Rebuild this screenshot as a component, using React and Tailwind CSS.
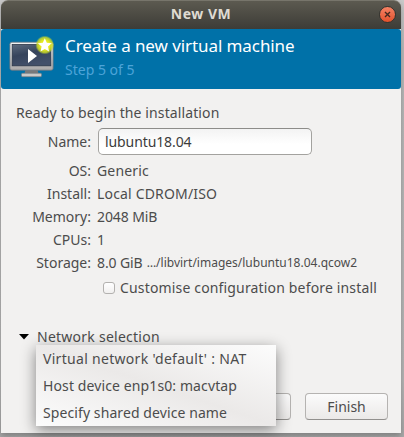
const details = [
  ['OS:', 'Generic', 'tracking-[0.15px]'],
  ['Install:', 'Local CDROM/ISO', 'tracking-[0.17px]'],
  ['Memory:', '2048 MiB', 'tracking-[-0.1px]'],
  ['CPUs:', '1', ''],
];

const networks = [
  ["Virtual network 'default' : NAT", 'tracking-[0.3px]'],
  ['Host device enp1s0: macvtap', 'tracking-[0.11px]'],
  ['Specify shared device name', 'tracking-[0.09px]'],
];

function MonitorIcon() {
  return (
    <svg width="46" height="44" viewBox="0 0 46 44" className="block shrink-0">
      <defs>
        <linearGradient id="frame" x1="0" y1="0" x2="0" y2="1">
          <stop offset="0" stopColor="#f4f4f4" />
          <stop offset="1" stopColor="#aaa8a8" />
        </linearGradient>
        <linearGradient id="screen" x1="0" y1="0" x2="0.4" y2="1">
          <stop offset="0" stopColor="#5d6b7e" />
          <stop offset="0.5" stopColor="#36445c" />
          <stop offset="1" stopColor="#43506a" />
        </linearGradient>
        <radialGradient id="glow">
          <stop offset="0.5" stopColor="#e6ea20" />
          <stop offset="0.8" stopColor="#cfdc25" stopOpacity="0.8" />
          <stop offset="1" stopColor="#a9c83a" stopOpacity="0" />
        </radialGradient>
      </defs>
      <path d="M16.5 34.5h12l1 4h-14z" fill="#77797b" />
      <rect x="12.5" y="38.3" width="20" height="3.4" rx="1" fill="#c9c9c8" stroke="#777" strokeWidth=".6" />
      <rect x=".9" y="7.2" width="43.2" height="28" rx="2" fill="url(#frame)" stroke="#6c7680" strokeWidth=".8" />
      <rect x="3.2" y="9.5" width="38.6" height="21.3" fill="url(#screen)" stroke="#2b3648" strokeWidth=".8" />
      <path d="M19 14l9 7-9 7z" fill="#fff" />
      <circle cx="35.8" cy="10" r="9.5" fill="url(#glow)" />
      <path d="M35.8 3.3l2 4.5 4.9.5-3.7 3.3 1.1 4.8-4.3-2.5-4.3 2.5 1.1-4.8-3.7-3.3 4.9-.5z" fill="#fff" />
    </svg>
  );
}

export default function App() {
  return (
    <div className="relative h-[437px] w-[404px] overflow-hidden bg-[linear-gradient(#c9c9c9_0px,#bababa_55px,#b7b7b7_380px,#a9a9a9_437px)] pl-px font-['Noto_Sans','Open_Sans',sans-serif] text-[14px] whitespace-nowrap text-[#4c4c4c]">
      <div className="flex h-[433px] w-[400px] flex-col rounded-t-[7px] bg-[#f2f1f0] shadow-[0_3px_6px_#0004]">
        <header className="flex h-[29px] shrink-0 items-center rounded-t-[7px] border-t border-[#77756b] bg-linear-to-b from-[#5c5a50] to-[#3d3c37] pr-[5px]">
          <h1 className="flex-1 pb-[2px] pl-[22px] text-center text-[14px] leading-none font-bold tracking-[0.5px] text-[#dfdbd2]">New VM</h1>
          <button className="mb-[2px] flex size-[17px] items-center justify-center rounded-full border border-[#34332e] bg-linear-to-b from-[#f58264] to-[#e2502a]">
            <svg width="7" height="7" viewBox="0 0 7 7">
              <path d="M1 1l5 5M6 1L1 6" stroke="#41281f" strokeWidth="1.4" />
            </svg>
          </button>
        </header>

        <div className="flex h-[60px] shrink-0 gap-[10px] rounded-[3px] bg-[#0071a8] pt-[6px] pl-[8px]">
          <MonitorIcon />
          <div>
            <div className="h-[23px] text-[17px] leading-[21px] tracking-[-0.08px] text-white">Create a new virtual machine</div>
            <div className="h-[23px] text-[14px] leading-[23px] text-[#4da4d8]">Step 5 of 5</div>
          </div>
        </div>

        <main className="flex flex-1 flex-col">
          <p className="mt-[13px] ml-[15px] h-[22px] leading-[22px] tracking-[0.11px]">Ready to begin the installation</p>
          <div className="mt-[4px] flex h-[27px] items-center">
            <label className="w-[90px] text-right">Name:</label>
            <div className="ml-[7px] h-[27px] w-[214px] rounded-[5px] border border-[#a3a29f] border-t-[#8d8c89] bg-linear-to-b from-[#f3f3f3] to-white to-60% pl-[6px] leading-[26px] tracking-[-0.1px] text-[#3c3c3c]">lubuntu18.04</div>
          </div>
          <dl className="mt-[4px] mb-px">
            {details.map(([name, value, tracking]) => (
              <div key={name} className="flex h-[23px] items-center leading-[23px]">
                <dt className="w-[90px] text-right">{name}</dt>
                <dd className={`ml-[6px] ${tracking}`}>{value}</dd>
              </div>
            ))}
            <div className="flex h-[23px] items-center leading-[23px]">
              <dt className="w-[90px] text-right">Storage:</dt>
              <dd className="ml-[6px] tracking-[-0.1px]">8.0 GiB</dd>
              <dd className="ml-[4px] text-[12px]">…/libvirt/images/lubuntu18.04.qcow2</dd>
            </div>
          </dl>
          <label className="mt-[1px] ml-[102px] flex h-[23px] items-center">
            <span className="size-[12px] rounded-[3px] border border-[#b3b1af] bg-linear-to-b from-white to-[#f1f0ef]" />
            <span className="-mt-px ml-[5px] tracking-[0.16px]">Customise configuration before install</span>
          </label>
          <div className="mt-[26px] ml-[18px] flex h-[23px] items-center">
            <svg width="10" height="6" viewBox="0 0 10 6">
              <path d="M0 0h10L5 5.5z" fill="#000" />
            </svg>
            <span className="-mt-px ml-[8px] tracking-[0.25px]">Network selection</span>
          </div>
          <footer className="mt-[45px] flex justify-end gap-[14px] pr-[13px]">
            <button className="h-[27px] w-[83px] rounded-[4px] border border-[#b5b3b1] border-b-[#92908e] bg-linear-to-b from-[#fbfbfb] to-[#ebe9e8]">Back</button>
            <button className="h-[27px] w-[83px] rounded-[4px] border border-[#b5b3b1] border-b-[#92908e] bg-linear-to-b from-[#fbfbfb] to-[#ebe9e8] leading-[25px]">Finish</button>
          </footer>
        </main>
      </div>

      <ul className="absolute top-[345px] left-[36px] h-[81px] w-[240px] bg-linear-[to_top_right,#fcfcfc,#ebe9e8_50%,#fcfcfc] shadow-[0_4px_14px_#0007]">
        {networks.map(([name, tracking]) => (
          <li key={name} className={`h-[27px] pl-[7px] leading-[27px] ${tracking}`}>{name}</li>
        ))}
      </ul>
    </div>
  );
}
